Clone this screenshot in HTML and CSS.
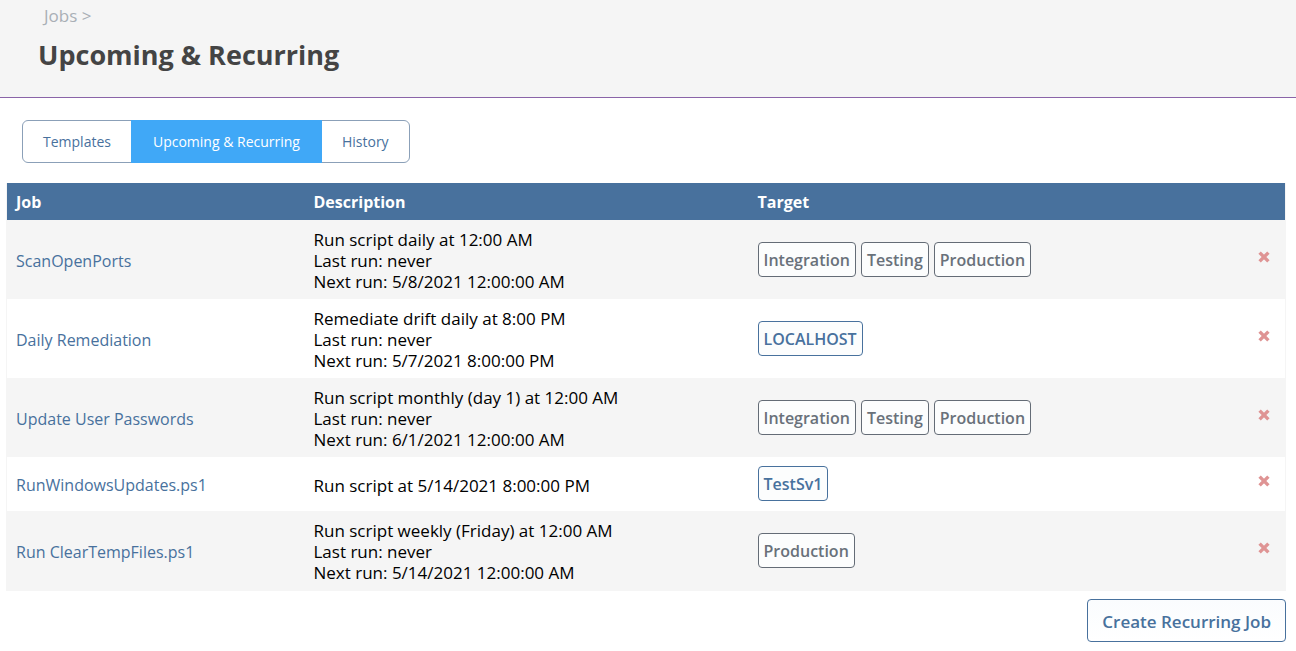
FILE: index.html
```html
<!DOCTYPE html>
<html lang="en">
<head>
<meta charset="utf-8">
<meta name="viewport" content="width=device-width, initial-scale=1">
<title>Upcoming &amp; Recurring</title>
<link rel="stylesheet" href="styles.css">
</head>
<body>
<svg class="sprite" aria-hidden="true"><symbol id="remove" viewBox="0 0 12 12"><path d="M1.6 1.6 10.4 10.4M10.4 1.6 1.6 10.4" fill="none" stroke="currentColor" stroke-width="3.4" stroke-linecap="butt"/></symbol></svg>
<header class="page-header">
  <nav class="breadcrumb" aria-label="Breadcrumb"><a href="#">Jobs</a> &gt;</nav>
  <h1 class="page-title">Upcoming &amp; Recurring</h1>
</header>
<main class="content">
  <nav class="tabs" aria-label="Job views">
    <a class="tab" href="#">Templates</a>
    <a class="tab tab-active" href="#" aria-current="page">Upcoming &amp; Recurring</a>
    <a class="tab" href="#">History</a>
  </nav>
  <table class="jobs">
    <colgroup><col class="col-job"><col class="col-description"><col><col class="col-remove"></colgroup>
    <thead>
      <tr><th scope="col">Job</th><th scope="col">Description</th><th scope="col">Target</th><td></td></tr>
    </thead>
    <tbody>
      <tr>
        <td><a class="job-link" href="#">ScanOpenPorts</a></td>
        <td>Run script daily at 12:00 AM<br>Last run: never<br>Next run: 5/8/2021 12:00:00 AM</td>
        <td><div class="targets"><a class="target" href="#">Integration</a><a class="target" href="#">Testing</a><a class="target" href="#">Production</a></div></td>
        <td><button class="remove" type="button" aria-label="Remove ScanOpenPorts"><svg class="icon"><use href="#remove"/></svg></button></td>
      </tr>
      <tr>
        <td><a class="job-link" href="#">Daily Remediation</a></td>
        <td>Remediate drift daily at 8:00 PM<br>Last run: never<br>Next run: 5/7/2021 8:00:00 PM</td>
        <td><div class="targets"><a class="target target-machine" href="#">LOCALHOST</a></div></td>
        <td><button class="remove" type="button" aria-label="Remove Daily Remediation"><svg class="icon"><use href="#remove"/></svg></button></td>
      </tr>
      <tr>
        <td><a class="job-link" href="#">Update User Passwords</a></td>
        <td>Run script monthly (day 1) at 12:00 AM<br>Last run: never<br>Next run: 6/1/2021 12:00:00 AM</td>
        <td><div class="targets"><a class="target" href="#">Integration</a><a class="target" href="#">Testing</a><a class="target" href="#">Production</a></div></td>
        <td><button class="remove" type="button" aria-label="Remove Update User Passwords"><svg class="icon"><use href="#remove"/></svg></button></td>
      </tr>
      <tr>
        <td><a class="job-link" href="#">RunWindowsUpdates.ps1</a></td>
        <td>Run script at 5/14/2021 8:00:00 PM</td>
        <td><div class="targets"><a class="target target-machine" href="#">TestSv1</a></div></td>
        <td><button class="remove" type="button" aria-label="Remove RunWindowsUpdates.ps1"><svg class="icon"><use href="#remove"/></svg></button></td>
      </tr>
      <tr>
        <td><a class="job-link" href="#">Run ClearTempFiles.ps1</a></td>
        <td>Run script weekly (Friday) at 12:00 AM<br>Last run: never<br>Next run: 5/14/2021 12:00:00 AM</td>
        <td><div class="targets"><a class="target" href="#">Production</a></div></td>
        <td><button class="remove" type="button" aria-label="Remove Run ClearTempFiles.ps1"><svg class="icon"><use href="#remove"/></svg></button></td>
      </tr>
    </tbody>
  </table>
  <div class="actions"><button class="create" type="button">Create Recurring Job</button></div>
</main>
</body>
</html>
```

FILE: styles.css
```css
* { box-sizing: border-box; }

body {
  margin: 0;
  background: #fff;
  color: #000;
  font-family: "Open Sans", "Noto Sans", sans-serif;
  font-size: 17px;
  line-height: 21px;
}

a { text-decoration: none; }

.sprite { display: none; }

.page-header {
  padding: 5px 38px 24px;
  background: #f5f5f5;
  border-bottom: 1px solid #8a64a8;
}

.breadcrumb {
  padding-left: 6px;
  color: #a9afb5;
}

.breadcrumb a { color: inherit; }

.page-title {
  margin: 11px 0 0;
  color: #444;
  font-size: 27px;
  font-weight: 700;
  line-height: 36px;
}

.content { padding: 22px 10px 9px 6px; }

.tabs {
  display: flex;
  width: fit-content;
  margin: 0 16px 20px;
  border: 1px solid #8ba0b8;
  border-radius: 6px;
}

.tab {
  margin: -1px 0;
  padding: 11px 20px;
  color: #48719d;
  font-size: 14px;
}

.tab-active {
  padding: 11px 22px;
  background: #40a8f7;
  color: #fff;
}

.jobs {
  width: 100%;
  border: 1px solid #f5f5f5;
  border-top: 0;
  border-collapse: collapse;
  table-layout: fixed;
}

.col-job { width: 298px; }
.col-description { width: 444px; }
.col-remove { width: 60px; }

.jobs th,
.jobs td {
  padding: 9px 9px 7px;
  text-align: left;
  vertical-align: middle;
}

.jobs th { font-size: 16px; }
.jobs thead { background: #48719d; color: #fff; }
.jobs tbody tr:nth-child(odd) { background: #f5f5f5; }

.job-link {
  color: #48719d;
  font-size: 16px;
}

.targets {
  display: flex;
  flex-wrap: wrap;
  gap: 5px;
  padding-bottom: 3px;
}

.target {
  padding: 7px 5px 5px;
  background: #fcfdfd;
  border: 1px solid #646c76;
  border-radius: 4px;
  color: #69717a;
  font-size: 16px;
  font-weight: 600;
}

.target-machine {
  border-color: #48719d;
  color: #48719d;
}

.remove {
  display: block;
  margin: 0 0 8px auto;
  padding: 6px;
  background: none;
  border: 0;
  color: #df9494;
}

.icon {
  display: block;
  width: 12px;
  height: 12px;
}

.actions {
  display: flex;
  justify-content: flex-end;
  padding-top: 8px;
}

.create {
  padding: 11px 14px 9px;
  background: linear-gradient(#fafcfe, #fff);
  border: 1px solid #48719d;
  border-radius: 4px;
  color: #48719d;
  font: inherit;
  font-weight: 600;
}
```
